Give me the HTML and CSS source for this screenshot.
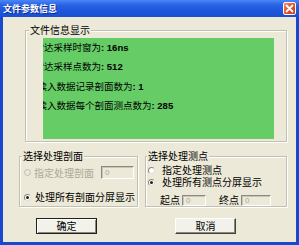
FILE: index.html
```html
<!DOCTYPE html>
<html lang="zh-CN">
<head>
<meta charset="utf-8">
<title>文件参数信息</title>
<link rel="stylesheet" href="styles.css">
</head>
<body>
<div class="window">
  <div class="titlebar">
    <span class="title">文件参数信息</span>
    <span class="close"><svg width="13" height="13" viewBox="0 0 13 13"><path d="M3.5 3.5 L9.5 9.5 M9.5 3.5 L3.5 9.5" stroke="#fff" stroke-width="1.8" stroke-linecap="round"/></svg></span>
  </div>
  <div class="client">
    <div class="group info">
      <div class="legend">文件信息显示</div>
      <div class="green">
        <div class="line l1">雷达采样时窗为<b>: 16ns</b></div>
        <div class="line l1">雷达采样点数为<b>: 512</b></div>
        <div class="line l3">读入数据记录剖面数为<b>: 1</b></div>
        <div class="line l3">读入数据每个剖面测点数为<b>: 285</b></div>
      </div>
    </div>
    <div class="row">
      <div class="group g2">
        <div class="legend lg2">选择处理剖面</div>
        <div class="opt o21">
          <span class="radio disabled"></span>
          <span class="dis-text">指定处理剖面</span>
          <span class="input in1">0</span>
        </div>
        <div class="opt o22">
          <span class="radio checked"></span>
          <span class="txt">处理所有剖面分屏显示</span>
        </div>
      </div>
      <div class="group g3">
        <div class="legend lg3">选择处理测点</div>
        <div class="opt o31">
          <span class="radio"></span>
          <span class="txt t3">指定处理测点</span>
        </div>
        <div class="opt o32">
          <span class="radio checked"></span>
          <span class="txt t3">处理所有测点分屏显示</span>
        </div>
        <div class="opt o33">
          <span class="txt">起点</span>
          <span class="input in2">0</span>
          <span class="txt end">终点</span>
          <span class="input in3">0</span>
        </div>
      </div>
    </div>
    <div class="buttons">
      <div class="btn default">确定</div>
      <div class="btn cancel">取消</div>
    </div>
  </div>
</div>
</body>
</html>
```
FILE: styles.css
```css
* { box-sizing: border-box; }
html, body { margin: 0; padding: 0; background: #ece9d8; }
body { font-family: "Noto Sans CJK SC", "Liberation Sans", sans-serif; font-size: 10px; color: #000; }

.window {
  width: 299px;
  height: 245px;
  background: #1848d0;
  display: flex;
  flex-direction: column;
  overflow: hidden;
}
.titlebar {
  height: 17px;
  flex: none;
  display: flex;
  align-items: center;
  justify-content: space-between;
  padding: 0 3px 0 3px;
  background: linear-gradient(#4a86f4 0%, #2a62e4 30%, #1c54da 70%, #1a4fd2 100%);
}
.title {
  color: #fff;
  font-weight: bold;
  font-size: 9px;
  line-height: 10px;
  text-shadow: 1px 1px 0 #0c2a90;
}
.close {
  width: 13px;
  height: 13px;
  border: 1px solid #fff;
  border-radius: 2px;
  background: linear-gradient(135deg, #f08a68 0%, #e0582e 45%, #c63c16 100%);
  display: flex;
  align-items: center;
  justify-content: center;
}
.close svg { display: block; margin: -1px; }

.client {
  flex: 1;
  margin: 0 3px 3px 3px;
  background: #ece9d8;
  display: flex;
  flex-direction: column;
}

.group {
  border: 1px solid #c4c0b0;
  box-shadow: inset 1px 1px 0 #fff, 1px 1px 0 #fff;
}
.legend {
  display: block;
  width: fit-content;
  height: 12px;
  line-height: 12px;
  margin: -7px 0 0 3px;
  padding: 0 1px;
  background: #ece9d8;
  white-space: nowrap;
}
.info {
  margin: 13px 0 0 22px;
  width: 262px;
  height: 112px;
}
.green {
  margin: 2px 0 0 17px;
  width: 231px;
  height: 101px;
  background: #66cc66;
  overflow: hidden;
}
.line {
  font-size: 9.5px;
  line-height: 18.4px;
  white-space: nowrap;
  color: #000;
}
.line b { font-family: "Liberation Sans", sans-serif; font-weight: bold; font-size: 9.5px; }
.l1 { margin-left: -8.5px; }
.l3 { margin-left: -5.5px; }

.row {
  display: flex;
  gap: 7px;
  margin: 14px 0 0 16px;
}
.g2 { width: 119px; height: 51px; }
.g3 { width: 142px; height: 51px; }
.lg2 { margin-left: 2px; }
.lg3 { margin-left: 1px; }

.opt {
  display: flex;
  align-items: center;
  white-space: nowrap;
  line-height: 12px;
}
.o21 { margin: 4px 0 0 4px; height: 13px; }
.o22 { margin: 12px 0 0 4px; height: 12px; }
.o31 { margin: 2px 0 0 2px; height: 12px; }
.o32 { margin: 0 0 0 2px; height: 12px; }
.o33 { margin: 6px 0 0 14px; height: 12px; }

.radio {
  width: 7px;
  height: 7px;
  border-radius: 50%;
  border: 1px solid #8a8878;
  border-right-color: #e0ded4;
  border-bottom-color: #e0ded4;
  background: #fff;
  flex: none;
  position: relative;
}
.radio.disabled { background: #ece9d8; border-color: #c0beb2; }
.radio.checked::after {
  content: "";
  position: absolute;
  left: 1px;
  top: 1px;
  width: 3px;
  height: 3px;
  border-radius: 50%;
  background: #202020;
}
.o21 .radio, .o22 .radio { margin-right: 3px; }
.o22 .txt { margin-left: 1px; }
.t3 { margin-left: 7px; }
.dis-text { color: #aca899; }

.input {
  height: 13px;
  border: 1px solid;
  border-color: #8c8a80 #fff #fff #8c8a80;
  box-shadow: inset 1px 1px 0 #c8c6ba;
  background: #ece9d8;
  color: #aca899;
  font-family: "Liberation Sans", sans-serif;
  font-size: 8px;
  line-height: 11px;
  padding-left: 3px;
}
.in1 { width: 33px; margin-left: 7px; }
.in2 { width: 24px; margin-left: 2px; height: 11px; line-height: 9px; }
.in3 { width: 30px; margin-left: 2px; height: 11px; line-height: 9px; }
.end { margin-left: 13px; }

.buttons {
  display: flex;
  gap: 78px;
  margin: 11px 0 0 33px;
}
.btn {
  width: 61px;
  height: 16px;
  line-height: 14px;
  text-align: center;
  background: #f2f1ea;
  border: 1px solid;
}
.default {
  border-color: #202020;
  box-shadow: inset 1px 1px 0 #fff, inset -1px -1px 0 #8a8878;
}
.cancel {
  border-color: #fff #404040 #404040 #fff;
  box-shadow: inset -1px -1px 0 #8a8878;
}
```
